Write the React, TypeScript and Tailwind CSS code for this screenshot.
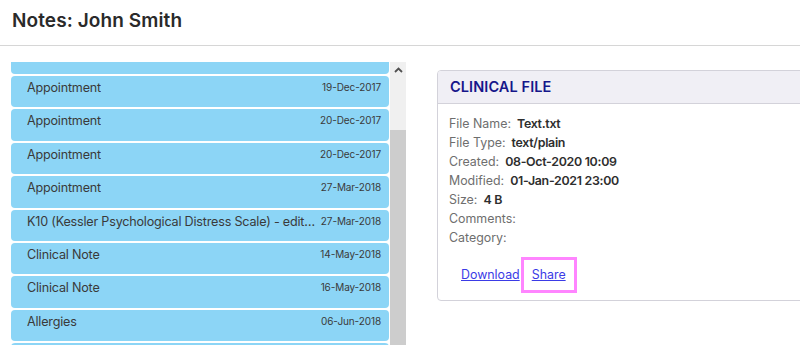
import React from "react";

const items: [string, string][] = [
  ["", ""],
  ["Appointment", "19-Dec-2017"],
  ["Appointment", "20-Dec-2017"],
  ["Appointment", "20-Dec-2017"],
  ["Appointment", "27-Mar-2018"],
  ["K10 (Kessler Psychological Distress Scale) - edited", "27-Mar-2018"],
  ["Clinical Note", "14-May-2018"],
  ["Clinical Note", "16-May-2018"],
  ["Allergies", "06-Jun-2018"],
  ["", ""],
];

const rows: [string, string][] = [
  ["File Name:", "Text.txt"],
  ["File Type:", "text/plain"],
  ["Created:", "08-Oct-2020 10:09"],
  ["Modified:", "01-Jan-2021 23:00"],
  ["Size:", "4 B"],
  ["Comments:", ""],
  ["Category:", ""],
];

export default function App() {
  return (
    <div
      className="w-[800px] h-[345px] overflow-hidden bg-white flex flex-col"
      style={{ fontFamily: "Inter, 'Noto Sans', sans-serif" }}
    >
      <div className="h-[46px] shrink-0 border-b border-[#d6d6d6] flex items-center pl-[12px]">
        <h1 className="text-[19px] font-semibold text-[#2a2a2a] tracking-[0.1px] pb-[2px]">
          Notes: John Smith
        </h1>
      </div>
      <div className="flex flex-1 min-h-0">
        <div className="ml-[11px] mt-[16px] w-[395px] flex min-h-0">
          <div className="w-[379px] overflow-hidden">
            <div className="mt-[-19.4px] flex flex-col">
              {items.map(([t, d], i) => (
                <div
                  key={i}
                  className="h-[31.4px] mb-[2px] shrink-0 rounded-[4px] bg-[#8cd5f6] flex justify-between pl-[16px] pr-[8px] pt-[4px]"
                >
                  <span className="text-[12.6px] leading-[16px] text-[#3a3a3a] truncate min-w-0 tracking-[-0.2px]">{t}</span>
                  <span className="text-[10px] leading-[14px] text-[#3a3a3a] shrink-0 ml-[4px] tracking-[-0.1px]">{d}</span>
                </div>
              ))}
            </div>
          </div>
          <div className="w-[16px] ml-[1px] flex flex-col bg-[#f0f0f0]">
            <div className="h-[16px] flex items-center justify-center">
              <svg width="9" height="6" viewBox="0 0 9 6">
                <path d="M1 5 L4.5 1.5 L8 5" stroke="#505050" strokeWidth="1.8" fill="none" />
              </svg>
            </div>
            <div className="h-[52px]" />
            <div className="flex-1 bg-[#cdcdcd]" />
          </div>
        </div>
        <div className="ml-[31px] mt-[24px] w-[390px] shrink-0 self-start rounded-[4px] border border-[#d3d2da] overflow-hidden">
          <div className="h-[33px] bg-[#f0eff5] border-b border-[#d3d2da] flex items-center pl-[12px]">
            <span className="text-[14.5px] font-semibold text-[#16168a] tracking-[0.1px]">CLINICAL FILE</span>
          </div>
          <div className="pl-[11px] pt-[11px] pb-[7px]">
            {rows.map(([l, v], i) => (
              <div key={i} className="h-[19px] flex items-center text-[12.4px]">
                <span className="text-[#6e6e6e]">{l}</span>
                {v && <span className="ml-[6px] font-semibold text-[#2e2e2e] tracking-[-0.3px]">{v}</span>}
              </div>
            ))}
            <div className="flex items-center mt-[9px] pl-[12px]">
              <a href="#" className="text-[12.4px] leading-[16px] text-[#3b3be6] underline">Download</a>
              <div className="ml-[1px] border-[3px] border-[#ff85ff] px-[8px] py-[7px]">
                <a href="#" className="block text-[12.4px] leading-[16px] text-[#3b3be6] underline">Share</a>
              </div>
            </div>
          </div>
        </div>
      </div>
    </div>
  );
}
